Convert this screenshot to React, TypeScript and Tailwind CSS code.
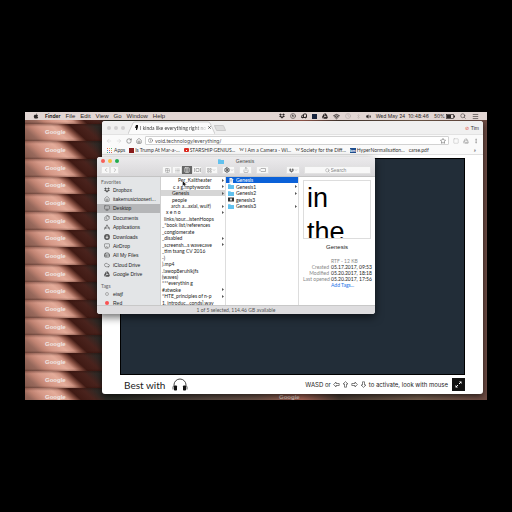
import type { ReactNode } from "react";
import {
  ArrowLeft, ArrowRight, ChevronDown, ChevronLeft, ChevronRight, Clock, Cloud, Bluetooth,
  Columns3, Files, Grid2x2, HardDrive, Home, Info, LayoutGrid, List, Monitor, Airplay,
  RotateCw, Search, Settings, Share, Star, Volume2, Wifi, Menu, Truck, CircleStop, EllipsisVertical, Square,
} from "lucide-react";
import { FaApple, FaDropbox, FaGoogleDrive } from "react-icons/fa";

const sans = "font-['Liberation_Sans',Arial,sans-serif]";
const inter = "font-['Inter',sans-serif]";
const lato = "font-['Lato',sans-serif]";

const menus = ["File", "Edit", "View", "Go", "Window", "Help"];

function MenuBar() {
  return (
    <header className={`relative z-10 flex h-[8px] items-center justify-between bg-[#e2d6d3] px-[8px] text-[5px] leading-[8px] text-[#2b2626] ${inter}`}>
      <nav className={`flex items-center gap-[5px] text-[6px] ${sans}`}>
        <button aria-label="Apple menu" className="mr-[1px]"><FaApple className="size-[6px]" /></button>
        <button className={`text-[5px] font-bold ${inter}`}>Finder</button>
        {menus.map((m) => <button key={m}>{m}</button>)}
      </nav>
      <div className="flex items-center gap-[5px]">
        <FaDropbox className="size-[6px]" />
        <CircleStop className="size-[6px]" />
        <Truck className="size-[6px] -scale-x-100" strokeWidth={4} />
        <span className="size-[5px] bg-[#16233c]" />
        <FaGoogleDrive className="size-[6px]" />
        <Wifi className="size-[7px]" strokeWidth={3} />
        <Clock className="size-[6px] text-[#b0a6a4]" />
        <Bluetooth className="size-[5px] text-[#b8aeac]" />
        <Volume2 className="size-[5px] fill-current" />
        <span className="whitespace-pre">Wed May 24  10:48:46</span>
        <span className="flex items-center gap-[1px]">
          50%
          <svg className="h-[5px] w-[9px]" viewBox="0 0 9 5" aria-label="Battery">
            <rect x=".4" y=".4" width="7" height="4.2" fill="none" stroke="#2b2626" strokeWidth=".7" />
            <rect x="1" y="1" width="4" height="3" fill="#2b2626" />
            <rect x="8" y="1.5" width="1" height="2" fill="#2b2626" />
          </svg>
        </span>
        <Search className="size-[6px]" />
        <Menu className="ml-[1px] size-[7px]" />
      </div>
    </header>
  );
}

function Wallpaper() {
  return (
    <div className="absolute inset-0 overflow-hidden bg-[linear-gradient(90deg,#3a2622_0%,#2a2c26_20%,#5a4a42_40%,#6d5348_50%,#a36254_60%,#4a3c34_68%,#77604f_85%,#6e4c44_100%)]">
      <ul className="-mt-[6px] grid h-[300px] w-[80px] grid-rows-17">
        {Array.from({ length: 17 }, (_, i) => (
          <li key={i} className={`flex items-center bg-[linear-gradient(0deg,rgba(40,10,5,0.3),transparent_12%,transparent_84%,rgba(40,10,5,0.35)),linear-gradient(42deg,#80564a_0%,#98695c_14%,#c08372_22%,#d69988_30%,#e4ac9a_44%,#cf9382_51%,#8a5244_57%,#401a14_63%,#4a231d_76%,#302925_88%,#2b2a27_100%)] pl-[20px] text-[6px] font-bold leading-[8px] text-[#efe6e3] ${sans}`}>
            Google
          </li>
        ))}
      </ul>
      <span className={`absolute bottom-[-1px] left-[254px] text-[6px] font-bold leading-[8px] text-[#d6c2ba] ${sans}`}>Google</span>
    </div>
  );
}

function Bookmark({ icon, children }: { icon?: ReactNode; children: ReactNode }) {
  return <a href="#" className="flex shrink-0 items-center gap-[1px]">{icon}{children}</a>;
}

const wiki = <span className="font-['Liberation_Serif',serif] text-[5px] text-[#333]">W</span>;

function Browser() {
  return (
    <section className={`absolute bottom-[6px] left-[77px] right-[4px] top-[9px] flex flex-col overflow-hidden rounded-[3px] bg-white text-[5px] leading-[6px] text-[#333] shadow-[0_2px_6px_rgba(0,0,0,0.7)] ${sans}`}>
      <div className="flex h-[13px] shrink-0 items-center bg-[#f0f0f0] pl-[5px] pr-[4px]">
        <div className="flex gap-[3px]">
          {[0, 1, 2].map((i) => <span key={i} className="size-[4px] rounded-full bg-[#d0cfd0]" />)}
        </div>
        <div className="relative ml-[3px] flex h-[13px] w-[87px] items-center pl-[6px]">
          <svg className="absolute inset-0 h-full w-full" viewBox="0 0 87 13"><path d="M0 13L5 2Q5.500 1 7 1H80Q81 1 82 2L87 13" fill="#fbfbfb" stroke="#bdbdbd" strokeWidth=".7" /></svg>
          <svg className="relative size-[5px]" viewBox="0 0 5 5"><path d="M2 0h2v2l-1 3H2V3H1z" fill="#111" /></svg>
          <span className={`relative ml-[1px] whitespace-nowrap bg-linear-to-r from-[#333] from-80% to-[#ddd] bg-clip-text text-transparent ${lato}`}>I kinda like everything right no</span>
          <button aria-label="Close tab" className="relative ml-auto mr-[4px]">
            <svg className="size-[3px]" viewBox="0 0 3 3"><path d="M.3.3l2.400 2.400M2.700.3L.3 2.700" stroke="#333" strokeWidth=".7" /></svg>
          </button>
        </div>
        <button aria-label="New tab" className="h-[6px] w-[10px] skew-x-[24deg] rounded-[1px] border border-[#c9c9c9] bg-[#dcdcdc]" />
        <button className="ml-auto flex items-center gap-[2px]"><span className="text-[#e2543e]">⊘</span>Tim</button>
      </div>
      <div className="flex h-[12px] shrink-0 items-center border-t border-[#e2e2e2] bg-[#fafafa] pl-[4px] pr-[4px]">
        <div className="flex items-center gap-[4px]">
          <button aria-label="Back"><ArrowLeft className="size-[6px] text-[#ccc]" /></button>
          <button aria-label="Forward"><ArrowRight className="size-[6px] text-[#ccc]" /></button>
          <button aria-label="Reload"><RotateCw className="size-[6px] text-[#555]" /></button>
          <button aria-label="Home"><Home className="size-[6px] text-[#555]" /></button>
        </div>
        <label className="ml-[3px] flex h-[9px] min-w-0 flex-1 items-center gap-[2px] rounded-[1px] border border-[#d2d2d2] bg-white px-[2px]">
          <Info className="size-[5px] shrink-0 text-[#555]" />
          <input aria-label="Address" defaultValue="void.technology/everything/" className={`min-w-0 flex-1 bg-transparent text-[5px] leading-[6px] text-[#444] outline-none ${inter}`} />
          <Star className="size-[6px] shrink-0 text-[#444]" />
        </label>
        <div className="ml-[4px] flex items-center gap-[4px] text-[#bbb]">
          <Square className="size-[6px]" />
          <FaGoogleDrive className="size-[6px]" />
          <EllipsisVertical className="size-[6px] text-[#777]" />
        </div>
      </div>
      <nav className={`flex h-[9px] shrink-0 items-center gap-[4px] border-b border-[#e0e0e0] bg-[#fafafa] px-[5px] ${lato}`}>
        <Bookmark icon={
          <span className="mr-[1px] grid grid-cols-3 gap-px">
            {["bg-[#e86a5c]", "bg-[#e8b45c]", "bg-[#5cb87a]", "bg-[#5c8fe8]", "bg-[#e86a5c]", "bg-[#e8b45c]", "bg-[#5cb87a]", "bg-[#5c8fe8]", "bg-[#e86a5c]"].map((c, i) => <i key={i} className={`size-[1px] ${c}`} />)}
          </span>}>Apps</Bookmark>
        <Bookmark icon={<span className="size-[5px] bg-[#8a1c1c]" />}>Is Trump At Mar-a-...</Bookmark>
        <Bookmark icon={<span className="flex h-[4px] w-[5px] items-center justify-center rounded-[1px] bg-[#dc2a20]"><i className="size-[1px] bg-white" /></span>}>STARSHIP GENIUS...</Bookmark>
        <Bookmark icon={wiki}>I Am a Camera - Wi...</Bookmark>
        <Bookmark icon={wiki}>Society for the Diff...</Bookmark>
        <Bookmark icon={<span className="h-[5px] w-[6px] bg-[#1d4e8f] text-center text-[4px] font-bold leading-[5px] text-white">bm</span>}>HyperNormalisation...</Bookmark>
        <Bookmark>carse.pdf</Bookmark>
        <button aria-label="More bookmarks" className="ml-auto mr-[2px]">»</button>
      </nav>
      <main className="flex min-h-0 flex-1 flex-col px-[18px] pt-[3px]">
        <div className="min-h-0 flex-1 border border-black bg-[#222d38]" />
        <footer className="flex h-[19px] shrink-0 items-center justify-between text-[#222]">
          <div className="flex items-center gap-[7px] pl-[4px]">
            <span className={`text-[10px] leading-[12px] ${lato}`}>Best with</span>
            <svg className="h-[13px] w-[16px]" viewBox="0 0 16 13" aria-label="Headphones">
              <path d="M2 9V7a6 6 0 0 1 12 0v2" fill="none" stroke="#333" strokeWidth=".9" />
              <rect x="2" y="7.500" width="3" height="5" rx=".8" fill="#111" />
              <rect x="11" y="7.500" width="3" height="5" rx=".8" fill="#111" />
              <path d="M1 8.500v3M15 8.500v3" stroke="#333" strokeWidth=".8" />
            </svg>
          </div>
          <div className={`flex items-center gap-[4px] text-[6px] leading-[8px] ${inter}`}>
            <span className="flex items-center gap-[2px]">
              WASD or
              {["rotate-0", "rotate-90", "rotate-180", "-rotate-90"].map((r) => (
                <svg key={r} className={`size-[7px] ${r}`} viewBox="0 0 7 7"><path d="M.6 3.500L3 1v1.500h3.200v2H3V6z" fill="none" stroke="#333" strokeWidth=".6" /></svg>
              ))}
              to activate, look with mouse
            </span>
            <button aria-label="Fullscreen" className="flex size-[13px] items-center justify-center bg-[#111]">
              <svg className="size-[7px]" viewBox="0 0 7 7"><path d="M4 .5h2.500V3zM.5 4v2.500H3z" fill="#fff" /><path d="M6 1L4 3M1 6l2-2" stroke="#fff" /></svg>
            </button>
          </div>
        </footer>
      </main>
    </section>
  );
}

const places = [
  { name: "Dropbox", icon: <FaDropbox className="size-[6px]" /> },
  { name: "itakemusictooseri...", icon: <Home className="size-[6px]" /> },
  { name: "Desktop", icon: <Monitor className="size-[6px]" />, active: true },
  { name: "Documents", icon: <Files className="size-[6px]" /> },
  { name: "Applications", icon: <svg className="size-[6px]" viewBox="0 0 6 6"><path d="M.5 5.500L3 .8l2.500 4.700M0 4h3.500M4.500 4H6" fill="none" stroke="currentColor" strokeWidth=".7" /></svg> },
  { name: "Downloads", icon: <svg className="size-[6px]" viewBox="0 0 6 6"><circle cx="3" cy="3" r="2.900" fill="currentColor" /><path d="M3 1.200v2.500M1.800 3L3 4.500 4.200 3z" stroke="#ddd" strokeWidth=".7" fill="#ddd" /></svg> },
  { name: "AirDrop", icon: <Airplay className="size-[6px]" /> },
  { name: "All My Files", icon: <HardDrive className="size-[6px]" strokeWidth={3} /> },
  { name: "iCloud Drive", icon: <Cloud className="size-[6px]" /> },
  { name: "Google Drive", icon: <FaGoogleDrive className="size-[6px]" /> },
];

const files = [
  { name: "Per_Kalitheater", pad: "pl-[17px]", dir: true },
  { name: "c a g..mptywords", pad: "pl-[12px]", dir: true },
  { name: "Genesis", pad: "pl-[11px]", dir: true, active: true },
  { name: "people", pad: "pl-[11px]" },
  { name: "arch a...axial, wulf)", pad: "pl-[10px]", dir: true },
  { name: "x e n o", pad: "pl-[5px]", dir: true },
  { name: "links/sour...istenHoops", pad: "pl-[3px]" },
  { name: "_*book list/references", pad: "pl-[1px]" },
  { name: "_conglomerate", pad: "pl-[1px]" },
  { name: "_disabled", pad: "pl-[1px]", dir: true },
  { name: "_screensh...s wavecave", pad: "pl-[1px]", dir: true },
  { name: "_tim tsang CV 2016", pad: "pl-[1px]" },
  { name: "-)", pad: "pl-[1px]" },
  { name: ").mp4", pad: "pl-[1px]" },
  { name: ".!awop8eruhlkjfs", pad: "pl-[1px]" },
  { name: "(waves)", pad: "pl-[1px]" },
  { name: "***everythin g", pad: "pl-[1px]" },
  { name: "#atwoke", pad: "pl-[1px]", dir: true },
  { name: "*HTE_principles of n-p", pad: "pl-[1px]", dir: true },
  { name: "1. introduc...conds].wav", pad: "pl-[1px]" },
];

const children = [
  { name: "Genesis", kind: "doc" },
  { name: "Genesis1", kind: "folder" },
  { name: "Genesis2", kind: "folder" },
  { name: "genesis3", kind: "image" },
  { name: "Genesis3", kind: "folder" },
];

const Arrow = () => <svg className="h-[3px] w-[2px] shrink-0" viewBox="0 0 2 3"><path d="M0 0l2 1.500L0 3z" fill="#555" /></svg>;
const Folder = () => <svg className="h-[5px] w-[6px] shrink-0" viewBox="0 0 6 5"><path d="M0 .3h2.300l.6.6H6V5H0z" fill="#62c1ee" /></svg>;

function KindIcon({ kind }: { kind: string }) {
  if (kind === "folder") return <Folder />;
  if (kind === "image") return <svg className="h-[5px] w-[6px]" viewBox="0 0 6 5"><path d="M0 .5h6v4H0z" fill="#333" /><path d="M2 1.500h2v2H2z" fill="#ddd" /></svg>;
  return <svg className="h-[5px] w-[6px]" viewBox="0 0 6 5"><path d="M1.500 0h2.300L5 1.200V5H1.500z" fill="#f4f4f4" /><path d="M2.200 2h2M2.200 3h2" stroke="#888" strokeWidth=".4" /></svg>;
}

const tool = "flex h-[8px] items-center justify-center rounded-[1px] border border-[#e2e2e2] bg-[#f8f8f8] text-[#888]";

const info = [["", "RTF - 12 KB"], ["Created", "05.17.2017, 09:53"], ["Modified", "05.20.2017, 18:18"], ["Last opened", "05.20.2017, 17:56"]];

function Finder() {
  return (
    <section className={`absolute left-[72px] top-[45px] flex h-[157px] w-[278px] flex-col overflow-hidden rounded-[3px] bg-white text-[5px] leading-[6px] text-[#222] shadow-[0_3px_9px_rgba(0,0,0,0.6)] ${sans}`}>
      <div className="flex h-[20px] shrink-0 flex-col border-b border-[#c4c4c4] bg-linear-to-b from-[#ebeaec] to-[#d8d7d9]">
        <div className="flex h-[8px] items-center px-[4px]">
          <div className="flex flex-1 gap-[3px]">
            <button aria-label="Close" className="size-[4px] rounded-full bg-[#f75f58]" />
            <button aria-label="Minimize" className="size-[4px] rounded-full bg-[#f9bd40]" />
            <button aria-label="Zoom" className="size-[4px] rounded-full bg-[#22ac4d]" />
          </div>
          <h1 className="flex items-center gap-[12px] text-[#444]"><Folder />Genesis</h1>
          <div className="flex-1" />
        </div>
        <div className="flex h-[10px] items-center px-[4px]">
          <div className="flex">
            <button aria-label="Back" className={`${tool} w-[9px]`}><ChevronLeft className="size-[6px]" /></button>
            <button aria-label="Forward" className={`${tool} w-[9px]`}><ChevronRight className="size-[6px]" /></button>
          </div>
          <div className="ml-[43px] flex">
            <button aria-label="Icons" className={`${tool} w-[10px]`}><Grid2x2 className="size-[5px]" /></button>
            <button aria-label="List" className={`${tool} w-[10px]`}><List className="size-[5px]" /></button>
            <button aria-label="Columns" className="flex h-[8px] w-[10px] items-center justify-center bg-[#666] text-white"><Columns3 className="size-[6px]" /></button>
            <button aria-label="Cover flow" className={`${tool} w-[10px]`}>
              <svg className="h-[4px] w-[7px]" viewBox="0 0 7 4"><path d="M.5 0v4M6.500 0v4M2 .5h3v3H2z" fill="none" stroke="#999" strokeWidth=".7" /></svg>
            </button>
          </div>
          <div className="ml-[3px] flex gap-[4px]">
            <button aria-label="Arrange" className={`${tool} w-[13px]`}><LayoutGrid className="size-[5px]" /><ChevronDown className="size-[4px]" /></button>
            <button aria-label="Action" className={`${tool} w-[13px]`}><Settings className="size-[6px] text-[#555]" strokeWidth={4} /><ChevronDown className="size-[4px]" /></button>
            <button aria-label="Share" className={`${tool} w-[13px]`}><Share className="size-[6px]" /></button>
            <button aria-label="Tags" className={`${tool} w-[13px]`}>
              <svg className="h-[4px] w-[7px]" viewBox="0 0 7 4"><path d="M2 .5h4.500v3H2L.5 2z" fill="none" stroke="#999" strokeWidth=".7" /></svg>
            </button>
          </div>
          <button aria-label="Dropbox" className={`${tool} ml-auto w-[14px]`}><FaDropbox className="size-[5px] text-[#555]" /><ChevronDown className="size-[4px]" /></button>
          <label className={`${tool} ml-[4px] w-[67px] gap-[1px]`}>
            <Search className="size-[5px] text-[#888]" />
            <input type="text" aria-label="Search" placeholder="Search" className="w-[20px] bg-transparent text-[5px] leading-[6px] outline-none placeholder:text-[#888]" />
          </label>
        </div>
      </div>
      <div className="flex min-h-0 flex-1">
        <aside className="w-[64px] shrink-0 border-r border-[#cfcfcf] bg-[#e3e5e7] pt-[2px]">
          <h2 className={`pl-[4px] text-[#666] ${lato}`}>Favorites</h2>
          <ul className="grid h-[94px] grid-rows-10">
            {places.map((p) => (
              <li key={p.name} className={p.active ? "flex bg-[#b5b6b8]" : "flex"}>
                <button className="flex w-full items-center gap-[3px] whitespace-nowrap pl-[7px]"><span className="text-[#555]">{p.icon}</span>{p.name}</button>
              </li>
            ))}
          </ul>
          <h2 className={`mt-[4px] pl-[4px] text-[#666] ${lato}`}>Tags</h2>
          <ul className="grid h-[18px] grid-rows-2">
            <li className="flex items-center gap-[4px] pl-[8px]"><span className="size-[4px] rounded-full border border-[#aaa]" />eiwjf</li>
            <li className="flex items-center gap-[4px] pl-[8px]"><span className="size-[4px] rounded-full bg-[#fa5252]" />Red</li>
          </ul>
        </aside>
        <ul className={`grid h-[129px] w-[65px] shrink-0 grid-rows-20 border-r border-[#ddd] ${lato}`}>
          {files.map((f) => (
            <li key={f.name} className={f.active ? "flex bg-[#d6d6d6]" : "flex"}>
              <button className={`flex w-full items-center justify-between whitespace-nowrap pr-[1px] ${f.pad}`}>{f.name}{f.dir && <Arrow />}</button>
            </li>
          ))}
        </ul>
        <ul className={`grid h-[129px] w-[73px] shrink-0 grid-rows-20 border-r border-[#ddd] ${lato}`}>
          {children.map((c) => (
            <li key={c.name} className={c.kind === "doc" ? "flex bg-[#0b61d8] text-white" : "flex"}>
              <button className="flex w-full items-center gap-[2px] pl-[2px] pr-[1px]"><KindIcon kind={c.kind} />{c.name}<span className="ml-auto">{c.kind === "folder" && <Arrow />}</span></button>
            </li>
          ))}
        </ul>
        <div className="flex min-w-0 flex-1 flex-col px-[4px] pt-[3px]">
          <div className="h-[59px] shrink-0 overflow-hidden border border-[#ddd] pl-[3px] text-[27px] leading-[34px] text-black">in<br />the</div>
          <h2 className="mt-[4px] text-center text-[6px] leading-[8px]">Genesis</h2>
          <dl className={`mt-[7px] grid grid-cols-[26px_1fr] gap-x-[2px] whitespace-nowrap ${lato}`}>
            {info.map(([k, v]) => (
              <div key={v} className="contents"><dt className="text-right text-[#888]">{k}</dt><dd className={k ? "" : "text-[#888]"}>{v}</dd></div>
            ))}
          </dl>
          <a href="#" className={`ml-[28px] text-[#1a73e8] ${lato}`}>Add Tags...</a>
        </div>
      </div>
      <footer className={`flex h-[9px] shrink-0 items-center justify-center border-t border-[#c8c8c8] bg-[#dedddf] text-[#555] ${lato}`}>1 of 5 selected, 114.46 GB available</footer>
      <svg className="absolute left-[85px] top-[23px] h-[8px] w-[5px]" viewBox="0 0 5 8"><path d="M.5.5v5.800l1.400-1.200 1 2.400 1-.5-1-2.200h1.700z" fill="#111" stroke="#fff" strokeWidth=".4" /></svg>
    </section>
  );
}

export default function App() {
  return (
    <div className="flex h-screen w-full bg-black px-[25px] py-[112px]">
      <div className="relative min-w-0 flex-1 overflow-hidden">
        <Wallpaper />
        <MenuBar />
        <Browser />
        <Finder />
      </div>
    </div>
  );
}
